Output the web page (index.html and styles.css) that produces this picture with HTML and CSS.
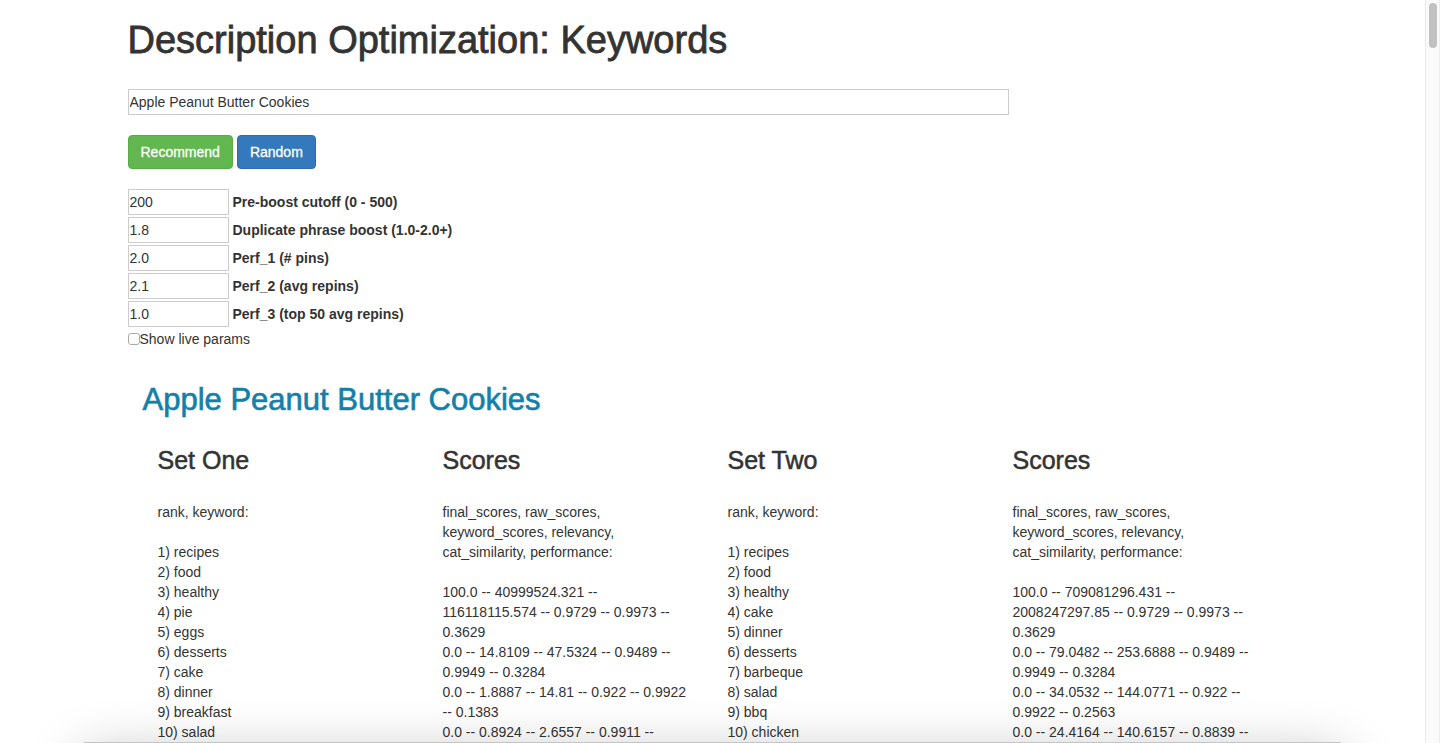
FILE: index.html
```html
<!DOCTYPE html>
<html lang="en">

<head>
    <meta charset="UTF-8">
    <meta name="viewport" content="width=device-width, initial-scale=1.0">
    <title>Description Optimization: Keywords</title>
    <link rel="stylesheet" href="styles.css">
</head>

<body>
    <div class="window">
        <main class="page">
            <div class="container">
                <h1>Description Optimization: Keywords</h1>

                <form class="keyword-form">
                    <input type="text" class="description" aria-label="Description" value="Apple Peanut Butter Cookies">
                    <div class="buttons">
                        <button type="button" class="btn btn-success">Recommend</button>
                        <button type="button" class="btn btn-primary">Random</button>
                    </div>
                    <div class="params">
                        <div class="param">
                            <input type="text" id="cutoff" value="200">
                            <label for="cutoff">Pre-boost cutoff (0 - 500)</label>
                        </div>
                        <div class="param">
                            <input type="text" id="boost" value="1.8">
                            <label for="boost">Duplicate phrase boost (1.0-2.0+)</label>
                        </div>
                        <div class="param">
                            <input type="text" id="perf1" value="2.0">
                            <label for="perf1">Perf_1 (# pins)</label>
                        </div>
                        <div class="param">
                            <input type="text" id="perf2" value="2.1">
                            <label for="perf2">Perf_2 (avg repins)</label>
                        </div>
                        <div class="param">
                            <input type="text" id="perf3" value="1.0">
                            <label for="perf3">Perf_3 (top 50 avg repins)</label>
                        </div>
                        <div class="live">
                            <input type="checkbox" id="live">
                            <label for="live">Show live params</label>
                        </div>
                    </div>
                </form>

                <section class="results">
                    <h2>Apple Peanut Butter Cookies</h2>
                    <div class="row">
                        <div class="col">
                            <h3>Set One</h3>
                            <p>rank, keyword:</p>
                            <p>
                                1) recipes<br>
                                2) food<br>
                                3) healthy<br>
                                4) pie<br>
                                5) eggs<br>
                                6) desserts<br>
                                7) cake<br>
                                8) dinner<br>
                                9) breakfast<br>
                                10) salad
                            </p>
                        </div>
                        <div class="col">
                            <h3>Scores</h3>
                            <p>final_scores, raw_scores, keyword_scores, relevancy, cat_similarity, performance:</p>
                            <p>
                                100.0 -- 40999524.321 -- 116118115.574 -- 0.9729 -- 0.9973 -- 0.3629<br>
                                0.0 -- 14.8109 -- 47.5324 -- 0.9489 -- 0.9949 -- 0.3284<br>
                                0.0 -- 1.8887 -- 14.81 -- 0.922 -- 0.9922 -- 0.1383<br>
                                0.0 -- 0.8924 -- 2.6557 -- 0.9911 --
                            </p>
                        </div>
                        <div class="col">
                            <h3>Set Two</h3>
                            <p>rank, keyword:</p>
                            <p>
                                1) recipes<br>
                                2) food<br>
                                3) healthy<br>
                                4) cake<br>
                                5) dinner<br>
                                6) desserts<br>
                                7) barbeque<br>
                                8) salad<br>
                                9) bbq<br>
                                10) chicken
                            </p>
                        </div>
                        <div class="col">
                            <h3>Scores</h3>
                            <p>final_scores, raw_scores, keyword_scores, relevancy, cat_similarity, performance:</p>
                            <p>
                                100.0 -- 709081296.431 -- 2008247297.85 -- 0.9729 -- 0.9973 -- 0.3629<br>
                                0.0 -- 79.0482 -- 253.6888 -- 0.9489 -- 0.9949 -- 0.3284<br>
                                0.0 -- 34.0532 -- 144.0771 -- 0.922 -- 0.9922 -- 0.2563<br>
                                0.0 -- 24.4164 -- 140.6157 -- 0.8839 --
                            </p>
                        </div>
                    </div>
                </section>
            </div>
        </main>
        <div class="scrollbar">
            <div class="thumb"></div>
        </div>
    </div>
    <div class="bottom-shadow"></div>
</body>

</html>
```
FILE: styles.css
```css
* {
    box-sizing: border-box;
}

body {
    margin: 0;
    font-family: "Helvetica Neue", Helvetica, "Liberation Sans", Arial, sans-serif;
    font-size: 14px;
    line-height: 20px;
    color: #333;
    background: #fff;
    overflow: hidden;
}

.window {
    display: grid;
    grid-template-columns: 1fr 15px;
    height: 100vh;
}

.page {
    overflow: hidden;
}

.container {
    max-width: 1170px;
    margin: 0 auto;
}

h1,
h2,
h3 {
    margin: 0;
    font-weight: 500;
    -webkit-text-stroke: thin;
}

h1 {
    padding: 20px 0 29px;
    font-size: 38px;
    line-height: 40px;
}

h2 {
    font-size: 31px;
    line-height: 34px;
    color: #1480a8;
}

h3 {
    margin-bottom: 28px;
    font-size: 25px;
    line-height: 28px;
}

p {
    margin: 0 0 20px;
}

input,
button {
    margin: 0;
    font: inherit;
    color: inherit;
}

input[type="text"] {
    height: 26px;
    padding: 1px;
    border: 1px solid #ccc;
    background: #fff;
}

.keyword-form {
    display: flex;
    flex-direction: column;
    gap: 20px;
}

.description {
    width: 100%;
    max-width: 881px;
}

.buttons {
    display: flex;
    gap: 4px;
}

.btn {
    padding: 6px 12px;
    border: 1px solid transparent;
    border-radius: 4px;
    color: #fff;
    cursor: pointer;
    -webkit-text-stroke: thin;
}

.btn-success {
    background: #62b750;
    border-color: #58ac46;
}

.btn-primary {
    background: #3479bb;
    border-color: #2e6ca7;
}

.params {
    display: flex;
    flex-direction: column;
    gap: 2px;
}

.param {
    display: flex;
    align-items: center;
    gap: 4px;
}

.param input {
    width: 101px;
}

.param label {
    font-weight: bold;
}

.live {
    display: flex;
    align-items: center;
}

.live input {
    appearance: none;
    width: 12px;
    height: 12px;
    border: 1px solid #aaa;
    border-radius: 3px;
    background: #fff;
}

.results {
    padding: 34px 15px 0;
}

.row {
    display: grid;
    grid-template-columns: repeat(4, 1fr);
    padding-top: 29px;
}

.col {
    padding: 0 20px 0 15px;
}

.scrollbar {
    padding: 3px;
    border-left: 1px solid #e8e8e8;
    border-right: 1px solid #ededed;
    background: #fafafa;
}

.thumb {
    width: 8px;
    height: 45px;
    border-radius: 4px;
    background: #c1c1c1;
}

/* shade rising from the lower edge of the window */
.bottom-shadow {
    position: fixed;
    top: calc(100% - 1px);
    left: 82px;
    right: 97px;
    height: 100px;
    border-radius: 4px;
    background: #c4c4c4;
    box-shadow: 0 16px 56px rgba(0, 0, 0, 0.3);
    pointer-events: none;
}
```
